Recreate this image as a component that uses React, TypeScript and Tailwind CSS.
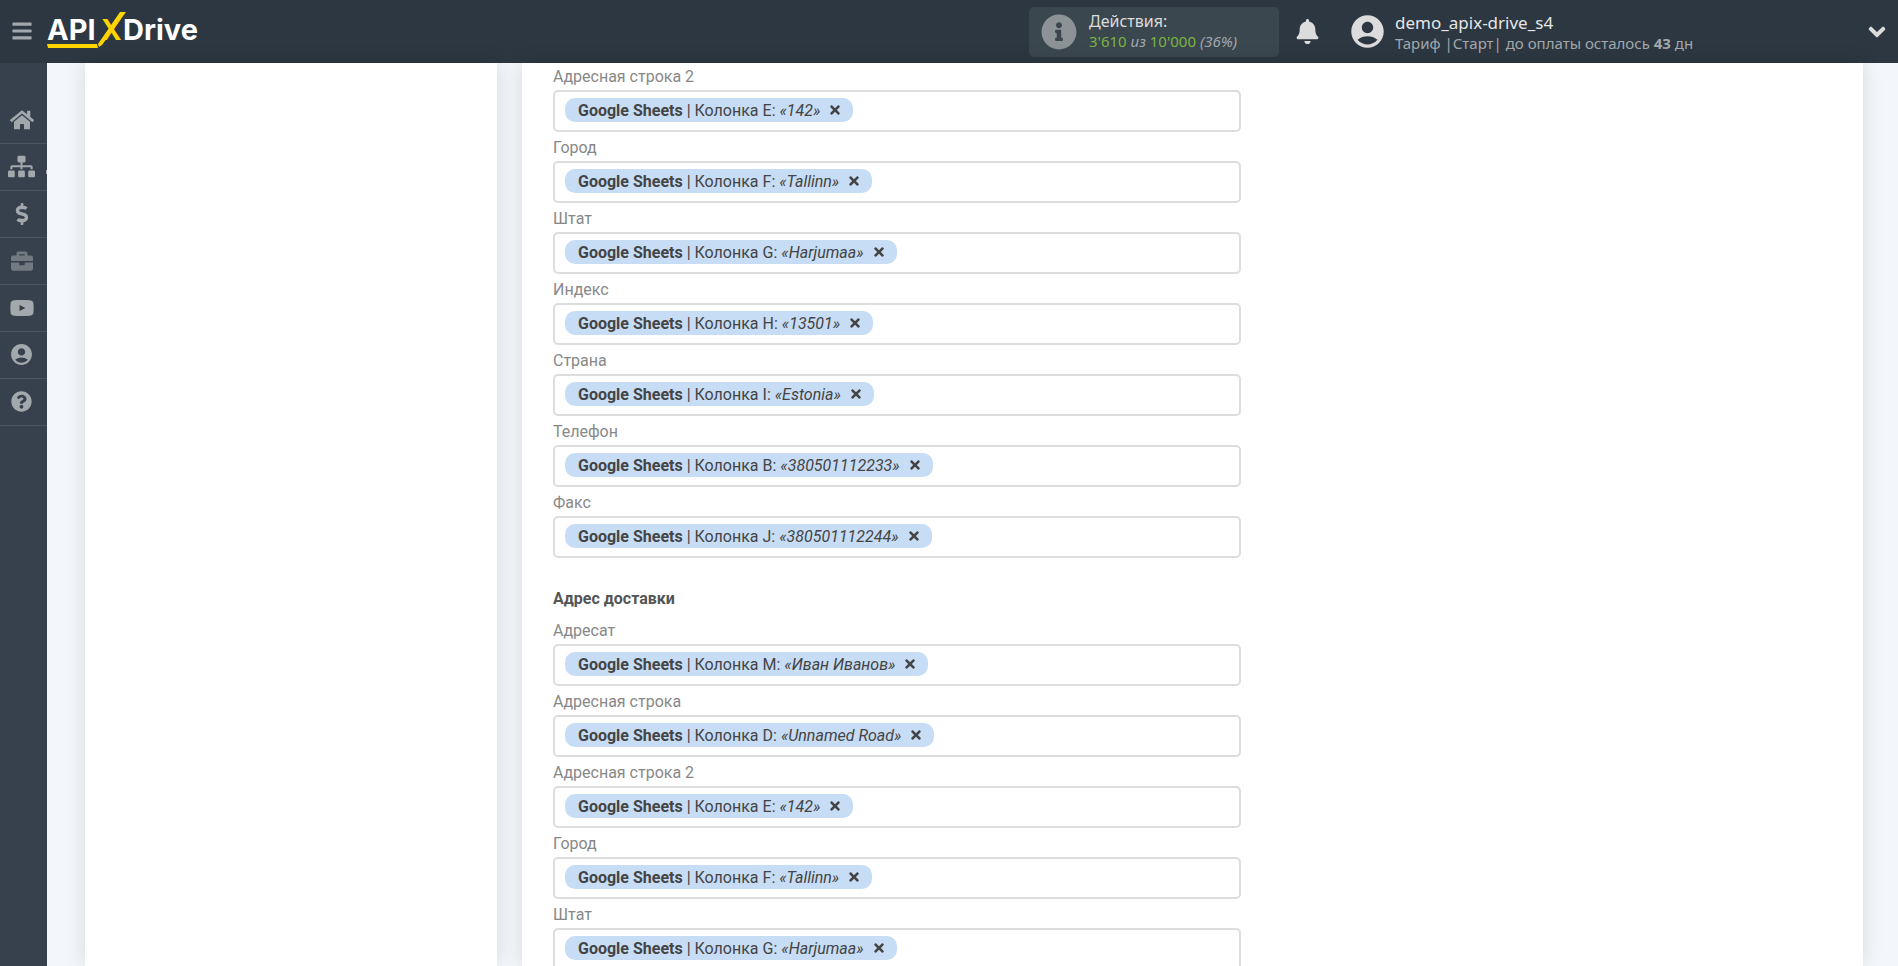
import React from 'react';
import {
  FaBars,
  FaBell,
  FaBriefcase,
  FaChevronDown,
  FaDollarSign,
  FaHome,
  FaInfoCircle,
  FaQuestionCircle,
  FaSitemap,
  FaTimes,
} from 'react-icons/fa';
import { MdAccountCircle } from 'react-icons/md';

interface FieldData {
  id: string;
  label: string;
  column: string;
  value: string;
}

const billingFields: FieldData[] = [
  { id: 'billing-line2', label: 'Адресная строка 2', column: 'E', value: '142' },
  { id: 'billing-city', label: 'Город', column: 'F', value: 'Tallinn' },
  { id: 'billing-state', label: 'Штат', column: 'G', value: 'Harjumaa' },
  { id: 'billing-zip', label: 'Индекс', column: 'H', value: '13501' },
  { id: 'billing-country', label: 'Страна', column: 'I', value: 'Estonia' },
  { id: 'billing-phone', label: 'Телефон', column: 'B', value: '380501112233' },
  { id: 'billing-fax', label: 'Факс', column: 'J', value: '380501112244' },
];

const shippingFields: FieldData[] = [
  { id: 'shipping-name', label: 'Адресат', column: 'M', value: 'Иван Иванов' },
  { id: 'shipping-line1', label: 'Адресная строка', column: 'D', value: 'Unnamed Road' },
  { id: 'shipping-line2', label: 'Адресная строка 2', column: 'E', value: '142' },
  { id: 'shipping-city', label: 'Город', column: 'F', value: 'Tallinn' },
  { id: 'shipping-state', label: 'Штат', column: 'G', value: 'Harjumaa' },
];

function VideoIcon() {
  return (
    <svg width="24" height="16" viewBox="0 0 24 16" fill="currentColor">
      <path
        fillRule="evenodd"
        d="M4 .3C9 -.1 15 -.1 20 .3C22.500 .5 23.500 2 23.500 4C23.700 7 23.700 9 23.500 12C23.500 14 22.500 15.500 20 15.700C15 16.100 9 16.100 4 15.700C1.500 15.500 .5 14 .5 12C.3 9 .3 7 .5 4C.5 2 1.500 .5 4 .3ZM9.500 5V11L15.500 8Z"
      />
    </svg>
  );
}

const navItems = [
  { name: 'Главная', icon: <FaHome size={24} /> },
  { name: 'Связи', icon: <FaSitemap size={27} />, marker: true },
  { name: 'Оплата', icon: <FaDollarSign size={22} /> },
  { name: 'Проекты', icon: <FaBriefcase size={22} />, dim: true },
  { name: 'Видео', icon: <VideoIcon /> },
  { name: 'Профиль', icon: <MdAccountCircle size={25} /> },
  { name: 'Помощь', icon: <FaQuestionCircle size={21} /> },
];

function Logo() {
  return (
    <svg width="156" height="40" viewBox="0 0 156 40" className="font-['Inter',sans-serif] font-bold">
      <text x="0" y="28" fontSize="29" fill="#fff">API</text>
      <text x="54" y="28" fontSize="28" fill="#ffd500">X</text>
      <text x="76" y="28" fontSize="29" fill="#fff">Drive</text>
      <path d="M0 32H50L51 36H1Z" fill="#ffd500" />
      <path d="M51 32L73 0H79L55 33L52 35Z" fill="#ffd500" />
    </svg>
  );
}

function Field({ id, label, column, value }: FieldData) {
  return (
    <div className="mb-1">
      <label htmlFor={id} className="block mb-px text-base leading-6 text-[#888]">
        {label}
      </label>
      <div className="flex items-center h-[42px] border-2 border-[#ddd] rounded-[5px] pl-2.5 pr-2 pb-0.5 bg-white">
        <span className="flex items-center h-6 rounded-[10px] bg-[#c7ddf5] pl-[13px] pr-[11px] text-base text-[#444] whitespace-nowrap">
          <span className="pt-0.5">
            <b>Google Sheets</b> | Колонка {column}: <i>«{value}»</i>
          </span>
          <button type="button" aria-label="Удалить" className="ml-2">
            <FaTimes size={14} />
          </button>
        </span>
        <input id={id} type="text" className="flex-1 min-w-0 h-6 ml-1 outline-none bg-transparent" />
      </div>
    </div>
  );
}

export default function App() {
  return (
    <div className="flex flex-col h-screen overflow-hidden bg-[#f3f6fb] font-['Roboto',sans-serif]">
      <header className="flex items-center h-[63px] shrink-0 bg-[#2c3742] pl-[11px] pr-3 font-['Noto_Sans',sans-serif]">
        <button type="button" aria-label="Меню" className="pb-0.5 text-[#a3a8ac]">
          <FaBars size={22} />
        </button>
        <a href="#" aria-label="APIXDrive" className="ml-3.5">
          <Logo />
        </a>

        {/* Actions counter */}
        <div className="flex items-center ml-auto w-[250px] h-[50px] rounded-[5px] bg-[#3b474f] pl-3 text-[#dcdcdc]">
          <FaInfoCircle size={36} className="text-[#8c9296]" />
          <div className="ml-3 pb-0.5">
            <div className="text-base leading-5">Действия:</div>
            <div className="text-[15px] leading-5 text-[#a3a8ac]">
              <span className="text-[#7cb342]">3'610</span> <i>из</i> <span className="text-[#7cb342]">10'000</span>{' '}
              <i>(36%)</i>
            </div>
          </div>
        </div>

        <button type="button" aria-label="Уведомления" className="ml-4 text-[#dcdcdc]">
          <FaBell size={25} />
        </button>

        {/* Account */}
        <div className="flex items-center ml-7 w-[538px]">
          <MdAccountCircle size={39} className="text-[#dcdcdc]" />
          <div className="ml-2 pt-0.5">
            <div className="text-[17px] leading-5 text-[#e6e6e6]">demo_apix-drive_s4</div>
            <div className="text-[15px] leading-5 text-[#a3a8ac]">
              Тариф |Старт| до оплаты осталось <b>43</b> дн
            </div>
          </div>
          <button type="button" aria-label="Открыть меню" className="ml-auto text-[#dcdcdc]">
            <FaChevronDown size={18} stroke="currentColor" strokeWidth={36} />
          </button>
        </div>
      </header>

      <div className="flex flex-1 min-h-0">
        <nav className="w-[47px] shrink-0 bg-[#36414d] pt-[34px]">
          {navItems.map((item) => (
            <a
              key={item.name}
              href="#"
              aria-label={item.name}
              className={`relative flex items-center justify-center h-[47px] pr-1 pb-px border-b border-[#4a5560] ${
                item.dim ? 'text-[#717a81]' : 'text-[#a3a8ac]'
              }`}
            >
              {item.icon}
              {item.marker && <span className="absolute right-0 bottom-4 w-px h-1 bg-[#a3a8ac]" />}
            </a>
          ))}
        </nav>

        <main className="flex flex-1 min-w-0 gap-[25px] pl-[38px] pr-[35px]">
          <aside className="w-[412px] shrink-0 bg-white shadow-[0_0_20px_rgba(0,0,0,0.12)]" />
          <section className="flex-1 min-w-0 bg-white px-[31px] pt-0.5 shadow-[0_0_20px_rgba(0,0,0,0.12)]">
            <form className="max-w-[688px]">
              {billingFields.map((field) => (
                <Field key={field.id} {...field} />
              ))}
              <h3 className="pt-6 pb-2 text-base leading-[25px] font-bold text-[#555]">Адрес доставки</h3>
              {shippingFields.map((field) => (
                <Field key={field.id} {...field} />
              ))}
            </form>
          </section>
        </main>
      </div>
    </div>
  );
}
